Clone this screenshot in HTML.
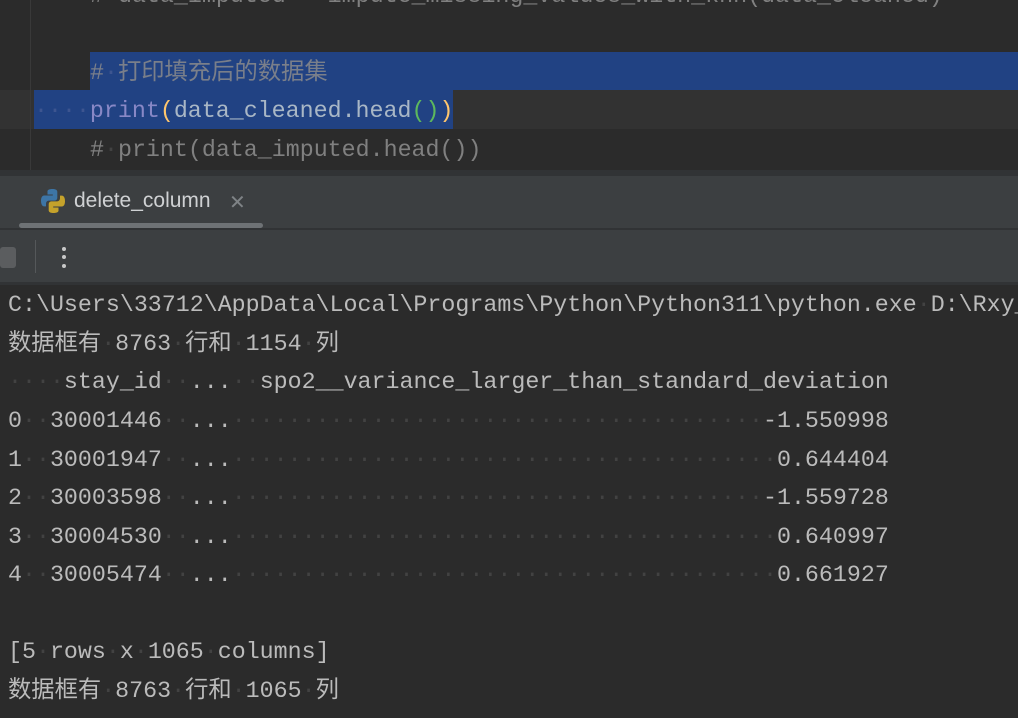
<!DOCTYPE html>
<html><head><meta charset="utf-8"><style>
body{margin:0;width:1018px;height:718px;overflow:hidden;background:#2b2b2b;position:relative;font-family:"Liberation Mono","Noto Sans CJK SC",monospace;}
.abs{position:absolute}
.ln{position:absolute;left:0;white-space:pre;font-size:23.3px;line-height:38.6px;height:38.6px;color:#bbbbbb}
i{font-style:normal;color:#424242}
.cm{color:#808080}
</style></head><body>
<!-- editor -->
<div class="abs" style="left:0;top:90px;width:1018px;height:39px;background:#323232"></div>
<div class="abs" style="left:90px;top:52px;width:928px;height:38px;background:#214283"></div>
<div class="abs" style="left:34px;top:90px;width:419px;height:39px;background:#214283"></div>
<div class="abs" style="left:30px;top:0;width:1px;height:172px;background:#393939"></div>
<div class="ln cm" style="left:90px;top:-23px"># data_imputed = impute_missing_values_with_knn(data_cleaned)</div>
<div class="ln" style="left:90px;top:54px;color:#7a7f8a"><span>#</span><i style="color:#3d5590">·</i>打印填充后的数据集</div>
<div class="ln" style="left:34px;top:92px"><i style="color:#3d5590">····</i><span style="color:#8888c6">print</span><span style="color:#ffc66d">(</span><span style="color:#a9b7c6">data_cleaned.head</span><span style="color:#5db85d">()</span><span style="color:#ffc66d">)</span></div>
<div class="ln cm" style="left:90px;top:131px">#<i>·</i>print(data_imputed.head())</div>
<!-- tool window -->
<div class="abs" style="left:0;top:170px;width:1018px;height:6px;background:#313335"></div>
<div class="abs" style="left:0;top:176px;width:1018px;height:107px;background:#3c3f41"></div>
<div class="abs" style="left:0;top:228px;width:1018px;height:2px;background:#313335"></div>
<div class="abs" style="left:19px;top:223px;width:244px;height:5px;border-radius:3px;background:#6e7275"></div>
<svg class="abs" style="left:40px;top:188px" width="26" height="26" viewBox="0 0 26 26">
<path d="M12.5 1C7 1 7.5 3.5 7.5 3.5V6.5h5.3v1H4.5S1 7 1 12.8s3.1 5.6 3.1 5.6H6v-2.7s-.1-3.1 3.1-3.1h5.2s3 .1 3-2.9V3.9S17.8 1 12.5 1z" fill="#3d75a6"/>
<path d="M13.5 25c5.5 0 5-2.5 5-2.5v-3h-5.3v-1h8.3s3.5.5 3.5-5.3-3.1-5.6-3.1-5.6H20v2.7s.1 3.1-3.1 3.1h-5.2s-3-.1-3 2.9v5.8S8.2 25 13.5 25z" fill="#c5a22b"/>
</svg>
<div class="abs" style="left:74px;top:189px;font-family:'Liberation Sans',sans-serif;font-size:21px;color:#cfd1d3">delete_column</div>
<div class="abs" style="left:229px;top:190px;font-family:'Liberation Sans',sans-serif;font-size:20px;color:#7f8386">✕</div>
<div class="abs" style="left:0;top:247px;width:16px;height:21px;border-radius:3px;background:#5b5d5f"></div>
<div class="abs" style="left:35px;top:240px;width:1px;height:33px;background:#55585a"></div>
<div class="abs" style="left:62px;top:247px;width:4px;height:4px;border-radius:2px;background:#c8c8c8"></div>
<div class="abs" style="left:62px;top:255px;width:4px;height:4px;border-radius:2px;background:#c8c8c8"></div>
<div class="abs" style="left:62px;top:264px;width:4px;height:4px;border-radius:2px;background:#c8c8c8"></div>
<div class="abs" style="left:0;top:282px;width:1018px;height:3px;background:#313335"></div>
<!-- console -->
<div class="ln" style="left:8px;top:286px">C:\Users\33712\AppData\Local\Programs\Python\Python311\python.exe<i>·</i>D:\Rxy_</div>
<div class="ln" style="left:8px;top:325px">数据框有<i>·</i>8763<i>·</i>行和<i>·</i>1154<i>·</i>列</div>
<div class="ln" style="left:8px;top:363px"><i>····</i>stay_id<i>··</i>...<i>··</i>spo2__variance_larger_than_standard_deviation</div>
<div class="ln" style="left:8px;top:402px">0<i>··</i>30001446<i>··</i>...<i>······································</i>-1.550998</div>
<div class="ln" style="left:8px;top:441px">1<i>··</i>30001947<i>··</i>...<i>·······································</i>0.644404</div>
<div class="ln" style="left:8px;top:479px">2<i>··</i>30003598<i>··</i>...<i>······································</i>-1.559728</div>
<div class="ln" style="left:8px;top:518px">3<i>··</i>30004530<i>··</i>...<i>·······································</i>0.640997</div>
<div class="ln" style="left:8px;top:556px">4<i>··</i>30005474<i>··</i>...<i>·······································</i>0.661927</div>
<div class="ln" style="left:8px;top:633px">[5<i>·</i>rows<i>·</i>x<i>·</i>1065<i>·</i>columns]</div>
<div class="ln" style="left:8px;top:672px">数据框有<i>·</i>8763<i>·</i>行和<i>·</i>1065<i>·</i>列</div>
</body></html>
